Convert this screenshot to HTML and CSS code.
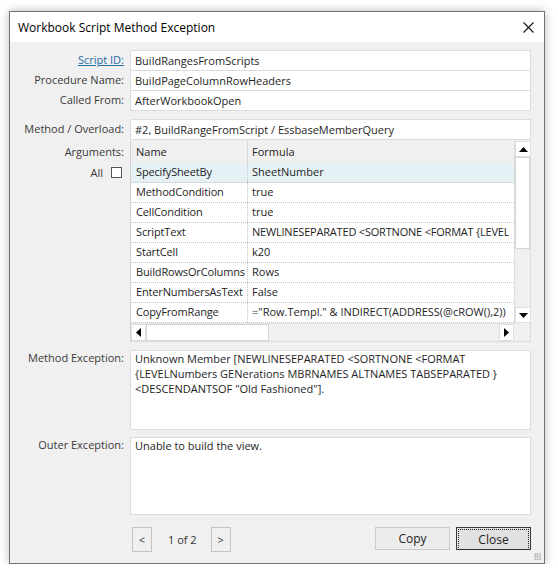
FILE: index.html
```html
<!DOCTYPE html>
<html lang="en">
<head>
  <meta charset="UTF-8">
  <title>Workbook Script Method Exception</title>
  <link rel="stylesheet" href="styles.css">
</head>
<body>
  <div class="window">
    <div class="titlebar">
      <span class="title">Workbook Script Method Exception</span>
      <svg class="close-x" width="11" height="11" viewBox="0 0 11 11">
        <path d="M0.5 0.5 L10.5 10.5 M10.5 0.5 L0.5 10.5" stroke="#111" stroke-width="1.1" fill="none"/>
      </svg>
    </div>

    <div class="content">
      <div class="group">
        <div class="row">
          <div class="lbl"><a class="link">Script ID:</a></div>
          <div class="field">BuildRangesFromScripts</div>
        </div>
        <div class="row">
          <div class="lbl">Procedure Name:</div>
          <div class="field">BuildPageColumnRowHeaders</div>
        </div>
        <div class="row">
          <div class="lbl">Called From:</div>
          <div class="field field-last">AfterWorkbookOpen</div>
        </div>
      </div>

      <div class="row method">
        <div class="lbl">Method / Overload:</div>
        <div class="field field-single">#2, BuildRangeFromScript / EssbaseMemberQuery</div>
      </div>

      <div class="row args-row">
        <div class="lbl lbl-args">
          <div class="args-label">Arguments:</div>
          <div class="all">All <span class="checkbox"></span></div>
        </div>
        <div class="args">
          <div class="cells">
            <div class="hdr">
              <div class="c1">Name</div>
              <div class="c2">Formula</div>
            </div>
            <div class="line selected"><div class="c1">SpecifySheetBy</div><div class="c2">SheetNumber</div></div>
            <div class="line"><div class="c1">MethodCondition</div><div class="c2">true</div></div>
            <div class="line"><div class="c1">CellCondition</div><div class="c2">true</div></div>
            <div class="line"><div class="c1">ScriptText</div><div class="c2 tight">NEWLINESEPARATED &lt;SORTNONE &lt;FORMAT {LEVEL</div></div>
            <div class="line"><div class="c1">StartCell</div><div class="c2">k20</div></div>
            <div class="line"><div class="c1">BuildRowsOrColumns</div><div class="c2">Rows</div></div>
            <div class="line"><div class="c1">EnterNumbersAsText</div><div class="c2">False</div></div>
            <div class="line"><div class="c1">CopyFromRange</div><div class="c2">="Row.Templ." &amp; INDIRECT(ADDRESS(@cROW(),2))</div></div>
          </div>
          <div class="vscroll">
            <div class="sbtn"><svg width="9" height="5" viewBox="0 0 9 5"><path d="M0 5 L4.5 0 L9 5 Z" fill="#000"/></svg></div>
            <div class="vthumb"></div>
            <div class="vtrack"></div>
            <div class="sbtn"><svg width="9" height="5" viewBox="0 0 9 5"><path d="M0 0 L4.5 5 L9 0 Z" fill="#000"/></svg></div>
          </div>
          <div class="hscroll">
            <div class="sbtn"><svg width="5" height="9" viewBox="0 0 5 9"><path d="M5 0 L0 4.5 L5 9 Z" fill="#000"/></svg></div>
            <div class="hthumb"></div>
            <div class="htrack"></div>
            <div class="sbtn"><svg width="5" height="9" viewBox="0 0 5 9"><path d="M0 0 L5 4.5 L0 9 Z" fill="#000"/></svg></div>
          </div>
          <div class="corner"></div>
        </div>
      </div>

      <div class="row exc">
        <div class="lbl lbl-top">Method Exception:</div>
        <div class="textbox tb-method">Unknown Member [NEWLINESEPARATED &lt;SORTNONE &lt;FORMAT {LEVELNumbers GENerations MBRNAMES ALTNAMES TABSEPARATED } &lt;DESCENDANTSOF "Old Fashioned"].</div>
      </div>

      <div class="row exc outer">
        <div class="lbl lbl-top">Outer Exception:</div>
        <div class="textbox tb-outer">Unable to build the view.</div>
      </div>

      <div class="row footer">
        <div class="lbl"></div>
        <div class="footer-main">
          <div class="pager">
            <button class="pbtn">&lt;</button>
            <span class="pinfo">1 of 2</span>
            <button class="pbtn">&gt;</button>
          </div>
          <div class="actions">
            <button class="btn">Copy</button>
            <button class="btn btn-default"><span>Close</span></button>
          </div>
        </div>
      </div>
    </div>
    <div class="grip"></div>
  </div>
</body>
</html>
```

FILE: styles.css
```css
body {
  margin: 0;
  background-color: #fff;
  font-family: 'Open Sans', 'Noto Sans', sans-serif;
  font-size: 11px;
  color: #1e1e1e;
}

.window {
  position: relative;
  margin: 11px 0 0 9px;
  width: 534px;
  height: 551px;
  border: 1px solid #747474;
  background-color: #f0f0f0;
  box-shadow: 0 0 9px rgba(0, 0, 0, 0.28);
}

.titlebar {
  height: 30px;
  background-color: #fff;
  display: flex;
  align-items: center;
  justify-content: space-between;
  padding: 0 10px 0 8px;
}

.title {
  font-size: 12px;
  color: #000;
}

.content {
  padding-top: 8px;
}

.row {
  display: flex;
}

.lbl {
  width: 114px;
  margin-right: 6px;
  flex-shrink: 0;
  text-align: right;
  color: #3a3a3a;
  line-height: 20px;
}

.link {
  color: #1f6ea6;
  text-decoration: underline;
}

.field {
  width: 395px;
  height: 19px;
  line-height: 19px;
  padding-left: 4px;
  border: 1px solid #dcdcdc;
  border-bottom: none;
  background-color: #fff;
  white-space: nowrap;
  overflow: hidden;
}

.field-last,
.field-single {
  border-bottom: 1px solid #dcdcdc;
}

.method {
  margin-top: 8px;
}

.args-row {
  margin-top: 1px;
}

.lbl-args {
  line-height: normal;
}

.args-label {
  line-height: 21px;
}

.all {
  display: flex;
  justify-content: flex-end;
  align-items: center;
  gap: 8px;
  height: 20px;
  margin-right: 2px;
}

.checkbox {
  width: 9px;
  height: 9px;
  border: 1px solid #555;
  background-color: #fff;
}

.args {
  width: 399px;
  height: 200px;
  border: 1px solid #dcdcdc;
  border-top: none;
  border-left-color: #d0d0d0;
  display: grid;
  grid-template-columns: 383px 16px;
  grid-template-rows: 182px 18px;
  background-color: #f0f0f0;
}

.cells {
  background-color: #fff;
  overflow: hidden;
}

.hdr,
.line {
  display: flex;
  white-space: nowrap;
}

.hdr {
  height: 22px;
  line-height: 21px;
  background-color: #f0f0f0;
  color: #222;
}

.line {
  height: 19px;
  line-height: 18px;
  border-bottom: 1px dotted #c4c4c4;
}

.selected {
  background-color: #e5f1f5;
}

.c1 {
  width: 111px;
  padding-left: 5px;
  flex-shrink: 0;
  letter-spacing: -0.15px;
  border-right: 1px dotted #c4c4c4;
}

.hdr .c1 {
  letter-spacing: 0;
  border-right: 1px solid #d8d8d8;
}

.c2 {
  padding-left: 4px;
  overflow: hidden;
}

.tight {
  letter-spacing: -0.2px;
}

.vscroll {
  display: flex;
  flex-direction: column;
  border-left: 1px solid #dcdcdc;
}

.hscroll {
  display: flex;
  border-top: 1px solid #e4e4e4;
}

.sbtn {
  width: 15px;
  height: 16px;
  display: flex;
  align-items: center;
  justify-content: center;
  background-color: #fff;
  border: 1px solid #e0e0e0;
  box-sizing: border-box;
  flex-shrink: 0;
}

.vscroll .sbtn {
  width: 16px;
}

.vthumb {
  height: 90px;
  background-color: #fff;
  border: 1px solid #d6d6d6;
}

.vtrack,
.htrack {
  flex: 1;
}

.hthumb {
  width: 121px;
  background-color: #fff;
  border: 1px solid #d6d6d6;
}

.hscroll .sbtn {
  height: 17px;
}

.exc {
  margin-top: 8px;
}

.outer {
  margin-top: 7px;
}

.lbl-top {
  line-height: 15px;
}

.textbox {
  width: 391px;
  padding: 0 4px;
  border: 1px solid #dcdcdc;
  background-color: #fff;
  line-height: 15px;
}

.tb-method {
  height: 78px;
}

.tb-outer {
  height: 76px;
}

.footer {
  margin-top: 12px;
}

.footer-main {
  width: 401px;
  display: flex;
  justify-content: space-between;
}

.pager {
  display: flex;
  align-items: center;
  margin-left: 2px;
}

.pbtn {
  width: 20px;
  height: 25px;
  padding: 0;
  border: 1px solid #c4c4c4;
  background-color: #f0f0f0;
  font-family: inherit;
  font-size: 11px;
  color: #333;
}

.pinfo {
  margin: 0 14px 0 16px;
  color: #333;
}

.actions {
  display: flex;
  gap: 6px;
  align-items: flex-start;
}

.btn {
  width: 75px;
  height: 23px;
  padding: 0;
  border: 1px solid #cacaca;
  background-color: #ececec;
  font-family: inherit;
  font-size: 12px;
  color: #222;
}

.btn-default {
  border: 1px solid #3a3a3a;
  background-color: #e1e1e1;
  padding: 1px;
}

.btn-default span {
  display: block;
  height: 19px;
  line-height: 19px;
  border: 1px dotted #222;
}

.grip {
  position: absolute;
  right: 3px;
  bottom: 3px;
  width: 7px;
  height: 7px;
  background-image: radial-gradient(circle, #b8b8b8 0.9px, transparent 1px);
  background-size: 2.5px 2.5px;
}
```
